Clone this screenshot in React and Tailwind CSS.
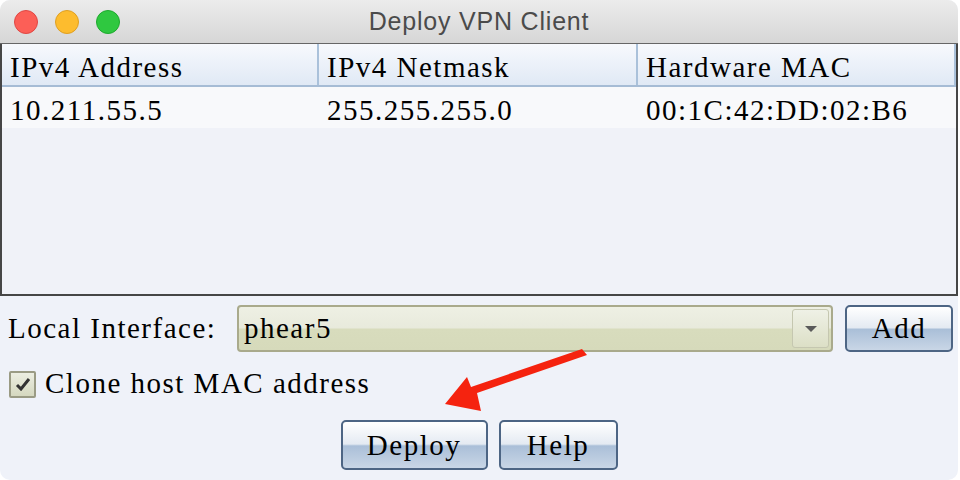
import React from 'react';

const serif = { fontFamily: '"Liberation Serif", "Times New Roman", serif' };

function Btn({ children, className = '' }) {
  return (
    <button
      className={`relative shrink-0 rounded-[5px] border-2 border-[#4d6584] bg-[linear-gradient(to_bottom,#ffffff_0%,#e4eaf2_48%,#aabfd8_52%,#c9d6e6_100%)] text-black text-[29px] leading-none tracking-[1.5px] flex items-center justify-center ${className}`}
      style={serif}
    >
      {children}
    </button>
  );
}

export default function App() {
  const cols = [
    { head: 'IPv4 Address', val: '10.211.55.5', w: 'w-[317px]' },
    { head: 'IPv4 Netmask', val: '255.255.255.0', w: 'w-[319px]' },
    { head: 'Hardware MAC', val: '00:1C:42:DD:02:B6', w: 'w-[318px]' },
  ];

  return (
    <div className="w-[960px] h-[480px] bg-white">
      <div className="relative w-[958px] h-[480px] rounded-[10px] overflow-hidden bg-[#eff2f9] flex flex-col">
        {/* title bar */}
        <div className="h-[44px] shrink-0 grid grid-cols-[1fr_auto_1fr] items-center bg-[linear-gradient(to_bottom,#ececec,#d6d6d6)] border-b border-[#666666]">
          <div className="flex items-center gap-[17px] pl-[14px]">
            <span className="w-[24px] h-[24px] rounded-full bg-[#fc5f57] border border-[#df4744]" />
            <span className="w-[24px] h-[24px] rounded-full bg-[#fdbc2e] border border-[#de9f22]" />
            <span className="w-[24px] h-[24px] rounded-full bg-[#2fc840] border border-[#1ea92e]" />
          </div>
          <div className="text-[25px] leading-none text-[#4b4b4b] tracking-[0.8px]" style={{ fontFamily: '"Liberation Sans", Arial, sans-serif' }}>
            Deploy VPN Client
          </div>
          <div />
        </div>

        {/* table */}
        <div className="h-[252px] shrink-0 border-2 border-t-0 border-[#464646] bg-[#f0f2f8] flex flex-col" style={serif}>
          <div className="h-[43px] flex border-b-2 border-[#a6bcd5] bg-[linear-gradient(to_bottom,#f7f9fd,#e0e9f5)]">
            {cols.map((c) => (
              <div key={c.head} className={`${c.w} h-full border-r-2 border-[#aac1da] pl-[8px] pt-[6px] flex items-center text-[29px] tracking-[1.5px] text-black`}>
                {c.head}
              </div>
            ))}
          </div>
          <div className="h-[41px] flex bg-[#f8f9fb]">
            {cols.map((c) => (
              <div key={c.val} className={`${c.w} h-full pl-[8px] pt-[6px] flex items-center text-[29px] tracking-[1.5px] text-black`}>
                {c.val}
              </div>
            ))}
          </div>
        </div>

        {/* controls */}
        <div className="flex-1 flex flex-col pl-[8px] pr-[4px]" style={serif}>
          <div className="mt-[9px] h-[47px] flex items-center">
            <span className="w-[229px] shrink-0 text-[29px] tracking-[1.5px] text-black">Local Interface:</span>
            <div className="w-[596px] shrink-0 h-[47px] rounded-[4px] border-2 border-[#a9aa8c] bg-[linear-gradient(to_bottom,#eef0e4_0%,#e8eadc_48%,#d8dcbd_52%,#d6dabb_100%)] flex items-center">
              <span className="flex-1 pl-[5px] text-[29px] tracking-[1.5px] text-black">phear5</span>
              <div className="w-[37px] h-[39px] mr-[2px] rounded-[3px] border border-[#c5c7b0] bg-[linear-gradient(to_bottom,#eff1e6,#dcdfc6)] flex items-center justify-center">
                <span className="w-0 h-0 border-l-[6px] border-r-[6px] border-t-[6px] border-l-transparent border-r-transparent border-t-[#5a5a5a]" />
              </div>
            </div>
            <Btn className="ml-[12px] w-[108px] h-[47px]">Add</Btn>
          </div>

          <div className="mt-[18px] h-[28px] flex items-center">
            <div className="w-[27px] h-[27px] ml-[1px] rounded-[2px] border-2 border-[#9a9b84] bg-[linear-gradient(to_bottom,#eceee2,#d5d8bf)] flex items-center justify-center">
              <svg width="16" height="14" viewBox="0 0 16 14">
                <path d="M2 8 L6 12 L14 2" fill="none" stroke="#333333" strokeWidth="3" />
              </svg>
            </div>
            <span className="ml-[9px] text-[29px] tracking-[1.5px] text-black">Clone host MAC address</span>
          </div>

          <div className="mt-[22px] flex justify-center gap-[11px] pr-[4px]">
            <Btn className="w-[147px] h-[50px]">Deploy</Btn>
            <Btn className="w-[119px] h-[50px]">Help</Btn>
          </div>
        </div>

        {/* annotation arrow */}
        <svg className="absolute left-0 top-0 pointer-events-none" width="958" height="480">
          <path d="M582 349 L587 355 L477 393 L481 411 L445 404 L467 377 L471 387 Z" fill="#f5230f" />
        </svg>
      </div>
    </div>
  );
}
